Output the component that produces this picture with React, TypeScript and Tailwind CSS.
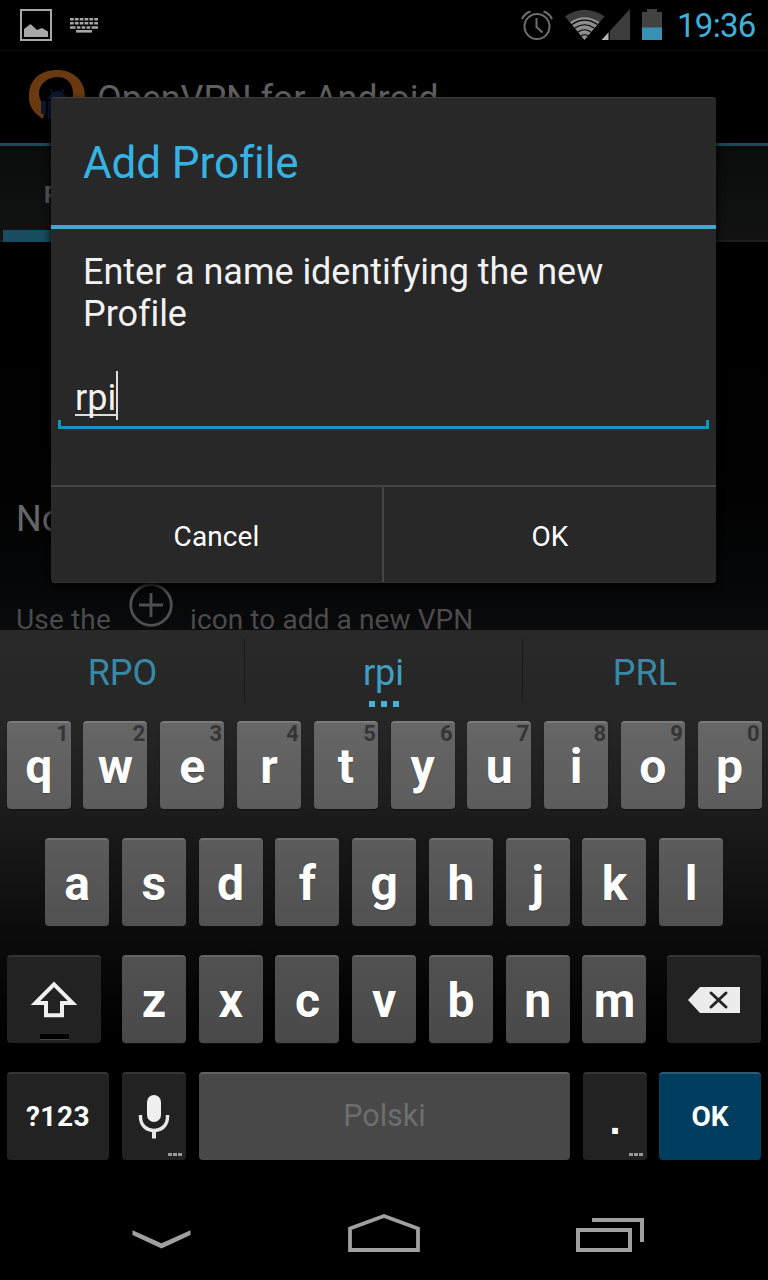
import type { ReactNode } from "react";

function StatusBar() {
  return (
    <header className="flex h-[51px] shrink-0 items-start border-b border-[#0a0a0a] bg-black">
      <svg className="ml-5 mt-[9px] h-8 w-8" viewBox="0 0 32 32">
        <rect x="1" y="1" width="30" height="30" fill="none" stroke="#a8a8a8" strokeWidth="2" />
        <path d="M4 20L10.500 15L17 21L22 19L28 22.500V28H4Z" fill="#a8a8a8" />
      </svg>
      <svg className="ml-[18px] mt-[17px] h-4 w-[28px]" viewBox="0 0 28 16">
        <g stroke="#a8a8a8" strokeWidth="2.600">
          <path d="M0 2.300H28M0 6.300H28" strokeDasharray="3.700 1.160" />
          <path d="M0 10.500H28" strokeDasharray="5.500 1.300 3.600 1.300 3.600 1.300 3.600 1.300 6.500" />
          <path d="M6 14.300H22" />
        </g>
      </svg>
      <div className="grow" />
      <svg className="mt-[10px] h-[31px] w-8" viewBox="0 0 32 31">
        <g fill="none" stroke="#6e6e6e" strokeWidth="2">
          <circle cx="16" cy="16.500" r="12.500" />
          <path d="M15.500 8V17L21.500 22.500M1 9Q4 3 9.500 1.500M31 9Q28 3 22.500 1.500" />
        </g>
      </svg>
      <svg className="ml-3 mt-[9px] h-8 w-[66px]" viewBox="0 0 66 32">
        <path d="M0 7.500Q19.500 -6 39.500 7.500L19.500 31Z" fill="#3c3c3c" />
        <path d="M5 13Q19.500 3.500 34.500 13L19.500 31Z" fill="#8e8e8e" />
        <path d="M7 15.500Q19.500 6.800 32.500 15.500M10 19Q19.500 12.500 29 19M13 23Q19.500 18.500 26 23M16 27Q19.500 24.500 23.500 27" fill="none" stroke="#000" strokeWidth="1.200" />
        <path d="M36.500 31L65 0V31Z" fill="#3c3c3c" />
        <path d="M36.500 31L43.500 23.500V31Z" fill="#b5b5b5" />
        <path d="M44.300 22V31.500" stroke="#000" />
      </svg>
      <svg className="ml-[11px] mt-[9px] h-[31px] w-5" viewBox="0 0 20 31">
        <path d="M0 3H5V0H15V3H20V31H0Z" fill="#424242" />
        <path d="M0 18.500H20V31H0Z" fill="#3891b3" />
      </svg>
      <span className="ml-[15px] mr-[12px] mt-[6px] w-[79px] whitespace-nowrap text-[33px] leading-10 tracking-[-0.700px] text-[#3fb0dc]">19:36</span>
    </header>
  );
}

function AppScreen() {
  return (
    <main className="flex h-[579px] shrink-0 flex-col overflow-hidden bg-gradient-to-b from-black from-40% to-[#090a0c]">
      <div className="flex h-[92px] shrink-0 items-start">
        <svg className="ml-7 mt-[18px] h-[58px] w-[58px]" viewBox="0 0 58 58">
          <path d="M15 50C4 43 0 35 1 25C2 9 14 1 29 1C45 1 58 11 57 30L55 36H45V25C45 14 39 8 29 8C18 8 11 17 11 24C11 31 15 35 17 38Z" fill="#6a390f" />
          <path d="M20 30Q23 22 29 22Q36 22 39 30ZM13 32H18V45H13ZM20 32H39V50H20Z" fill="#0b1830" />
          <path d="M22 20L25 24M36 20L33 24" stroke="#0b1830" strokeWidth="1.500" />
        </svg>
        <span className="ml-[11px] mt-[27px] whitespace-nowrap text-[36px] leading-[42px] tracking-[-0.100px] text-[#606060]">OpenVPN for Android</span>
      </div>
      <div className="h-[3px] shrink-0 bg-[#1b4a5b]" />
      <div className="flex h-[96px] shrink-0 flex-col justify-between border-b-2 border-[#1c1d1d] bg-gradient-to-b from-[#0a0c0c] to-[#111211] pl-[3px]">
        <span className="ml-[41px] mt-[35px] text-[24px] font-bold leading-7 text-[#5c5c5c]">P</span>
        <div className="-mb-[2px] h-3 w-[150px] bg-[#184d61]" />
      </div>
      <span className="ml-[16px] mt-[256px] text-[36px] leading-[42px] text-[#666]">No</span>
      <div className="ml-4 mt-[43px] flex text-[28px] leading-8 text-[#4b4b4b]">
        <span className="mt-[21px] w-[96px] whitespace-nowrap tracking-[0.150px]">Use the</span>
        <svg className="ml-[17px] mt-[0px] h-[44px] w-[44px]" viewBox="0 0 44 44">
          <g fill="none" stroke="#505050" strokeWidth="2.800">
            <circle cx="22" cy="22" r="20.300" />
            <path d="M10 22H34M22 10V34" />
          </g>
        </svg>
        <span className="ml-[17px] mt-[21px] whitespace-nowrap tracking-[0.100px]">icon to add a new VPN</span>
      </div>
    </main>
  );
}

function ProfileDialog() {
  return (
    <section className="absolute left-[51px] top-[97px] flex h-[486px] w-[665px] flex-col overflow-hidden rounded-[4px] border-b border-t border-b-[#333] border-t-[#404040] bg-[#282828] shadow-[0_4px_9px_0px_#000]">
      <h1 className="h-[127px] shrink-0 whitespace-nowrap pl-8 pt-[39px] text-[44px] font-normal leading-[52px] tracking-[-0.100px] text-[#36b3e2]">Add Profile</h1>
      <div className="h-1 shrink-0 bg-[#40a9d3]" />
      <p className="ml-8 mt-[22px] w-[570px] text-[36px] leading-[42px] tracking-[-0.040px] text-[#f2f2f2]">Enter a name identifying the new<br />Profile</p>
      <div className="ml-[7px] mt-[35px] flex h-[61px] w-[651px] shrink-0 flex-col">
        <div className="flex h-[52px] items-start pl-[17px]">
          <span className="mt-[8px] h-[38px] w-[43px] border-b-2 border-[#ddd] text-[36px] leading-[40px] text-[#f2f2f2]">rpi</span>
          <span className="-ml-[2px] mt-px h-[49px] w-[1.500px] bg-[#ddd]" />
        </div>
        <div className="-mt-[2px] h-[9px] border-x-[3px] border-b-[3px] border-[#1591c2]" />
      </div>
      <div className="mt-auto grid h-[97px] shrink-0 grid-cols-[333px_332px] border-t-2 border-[#454545] text-[28px] text-white">
        <button className="border-r-2 border-[#454545] pt-[4px] tracking-[0.100px]">Cancel</button>
        <button className="pt-[4px]">OK</button>
      </div>
    </section>
  );
}

function Suggestions() {
  return (
    <div className="grid h-[91px] shrink-0 grid-cols-[245px_277px_246px] text-center text-[36px] leading-[42px] text-[#3888a8]">
      <div className="relative pt-[22px] after:absolute after:right-0 after:top-[9px] after:h-[64px] after:w-[1.500px] after:bg-[#1a1a1a]">RPO</div>
      <div className="relative pt-[22px] text-[#3d9fc5] after:absolute after:-right-px after:top-[9px] after:h-[64px] after:w-[1.500px] after:bg-[#1a1a1a]">
        rpi
        <span className="absolute left-[124px] top-[71px] flex gap-[6px]">
          <i className="h-[6px] w-[6px] bg-[#45b2dc]" />
          <i className="h-[6px] w-[6px] bg-[#45b2dc]" />
          <i className="h-[6px] w-[6px] bg-[#45b2dc]" />
        </span>
      </div>
      <div className="pt-[22px]">PRL</div>
    </div>
  );
}

function Key({ label, hint, tone }: { label: string; hint?: string; tone: string }) {
  return (
    <button className={`relative h-[88px] w-16 rounded-[4px] border-t-2 text-[48px] font-bold leading-[56px] text-white shadow-[0_1px_1px_#111] ${tone}`}>
      <span className="block pt-[2px] [text-shadow:0_1px_1px_#444]">{label}</span>
      {hint && <span className="absolute right-[2px] top-0 text-[22px] leading-[22px] text-[#353535]">{hint}</span>}
    </button>
  );
}

function DarkKey({ children, width }: { children: ReactNode; width: string }) {
  return (
    <button className={`relative flex h-[88px] shrink-0 items-center justify-center rounded-[4px] border-t-2 border-[#353535] bg-[#222] font-bold text-white ${width}`}>
      {children}
    </button>
  );
}

function MoreDots() {
  return (
    <span className="absolute bottom-[4px] right-1 flex gap-[1px]">
      <i className="h-[3px] w-[4px] bg-[#999]" />
      <i className="h-[3px] w-[4px] bg-[#999]" />
      <i className="h-[3px] w-[4px] bg-[#999]" />
    </span>
  );
}

function Keyboard() {
  return (
    <section className="relative flex h-[560px] shrink-0 flex-col bg-[linear-gradient(#292929_0px,#262626_90px,#1c1c1c_180px,#0c0c0c_300px,#000_410px)]">
      <Suggestions />
      <div className="flex h-[117px] gap-[12.78px] pl-[6.7px]">
        {"qwertyuiop".split("").map((c, i) => (
          <Key key={c} label={c} hint={String((i + 1) % 10)} tone="border-[#7b7b7b] bg-gradient-to-b from-[#666] to-[#5c5c5c]" />
        ))}
      </div>
      <div className="flex h-[117px] gap-[12.78px] pl-[45.1px]">
        {"asdfghjkl".split("").map((c) => (
          <Key key={c} label={c} tone="border-[#6f6f6f] bg-gradient-to-b from-[#5b5b5b] to-[#515151]" />
        ))}
      </div>
      <div className="flex h-[117px] pl-[7px]">
        <DarkKey width="w-[94px]">
          <svg className="h-[40px] w-[52px]" viewBox="0 0 52 40">
            <path d="M26 4.300L44.500 22.900H34V35.200H18V22.900H7.500Z" fill="none" stroke="#f0f0f0" strokeWidth="4" />
          </svg>
          <span className="absolute bottom-[3px] left-[33px] h-[6px] w-[29px] border-b border-[#444] bg-black" />
        </DarkKey>
        <div className="ml-[20.9px] mr-[20.4px] flex gap-[12.78px]">
          {"zxcvbnm".split("").map((c) => (
            <Key key={c} label={c} tone="border-[#636363] bg-gradient-to-b from-[#515151] to-[#494949]" />
          ))}
        </div>
        <DarkKey width="w-[94px]">
          <svg className="mt-0 h-[28px] w-[54px]" viewBox="0 0 54 28">
            <path d="M1 14L13 1H53V27H13Z" fill="#ececec" />
            <path d="M24 7L39 21M39 7L24 21" stroke="#242424" strokeWidth="3" strokeLinecap="round" />
          </svg>
        </DarkKey>
      </div>
      <div className="flex gap-[13px] pl-[7px]">
        <DarkKey width="w-[102px]"><span className="text-[28px] tracking-[0.500px]">?123</span></DarkKey>
        <DarkKey width="w-16">
          <svg className="h-[44px] w-8" viewBox="0 0 32 44">
            <rect x="9" y="0" width="14" height="27" rx="7" fill="#f0f0f0" />
            <path d="M2.500 20V22C2.500 40 29.500 40 29.500 22V20" fill="none" stroke="#e8e8e8" strokeWidth="3.400" />
            <path d="M16 34V43.500" stroke="#e8e8e8" strokeWidth="4" />
          </svg>
          <MoreDots />
        </DarkKey>
        <button className="h-[88px] w-[371px] rounded-[4px] border-t-2 border-[#626262] bg-[#484848] pb-[2px] text-[30.500px] text-[#6e6e6e]">Polski</button>
        <DarkKey width="w-16">
          <span className="pt-[6px] font-['Liberation_Sans',sans-serif] text-[40px]">.</span>
          <MoreDots />
        </DarkKey>
        <button className="-ml-px h-[88px] w-[102px] rounded-[4px] border-t-2 border-[#2e5a74] bg-[#003d5e] text-[28px] font-bold text-white">OK</button>
      </div>
    </section>
  );
}

function NavigationBar() {
  return (
    <nav className="flex h-[90px] shrink-0 items-start bg-black">
      <svg className="ml-[132px] mt-[40px] h-5 w-[60px]" viewBox="0 0 60 20">
        <path d="M.5 .3V5L29.500 18.500L58.500 5V.3L29.500 13.200Z" fill="#a0a0a0" />
      </svg>
      <svg className="ml-[155px] mt-[23px] h-10 w-[74px]" viewBox="0 0 74 40">
        <path d="M3 15.500L37 3L71 15.500V37H3Z" fill="none" stroke="#a0a0a0" strokeWidth="3.800" />
      </svg>
      <svg className="ml-[155px] mt-[27px] h-9 w-[70px]" viewBox="0 0 70 36">
        <path d="M2 13H54V33H2ZM16 3H66V25" fill="none" stroke="#a0a0a0" strokeWidth="4" />
      </svg>
    </nav>
  );
}

export default function App() {
  return (
    <div className="relative flex h-[1280px] w-[768px] flex-col overflow-hidden bg-black font-['Roboto',sans-serif]">
      <StatusBar />
      <AppScreen />
      <ProfileDialog />
      <Keyboard />
      <NavigationBar />
    </div>
  );
}
